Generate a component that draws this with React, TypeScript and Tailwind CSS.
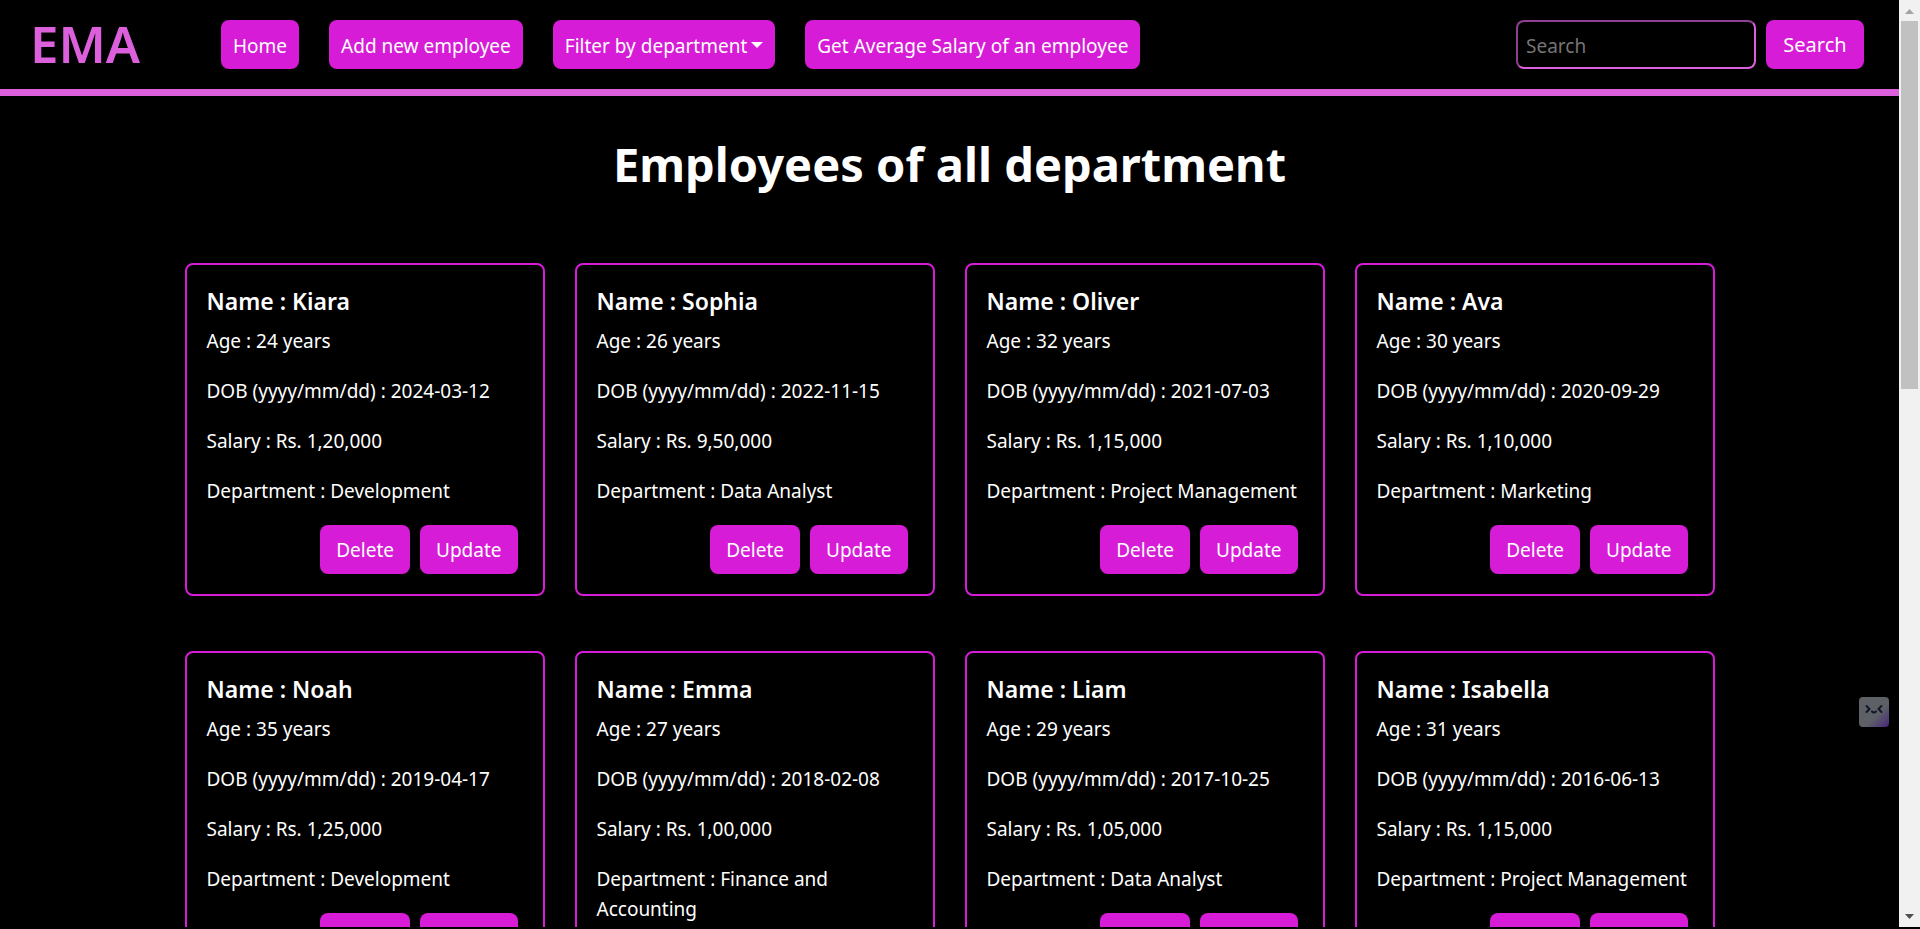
import React from "react";

type Employee = {
  name: string;
  age: number;
  dob: string;
  salary: string;
  department: string;
};

const employees: Employee[] = [
  { name: "Kiara", age: 24, dob: "2024-03-12", salary: "1,20,000", department: "Development" },
  { name: "Sophia", age: 26, dob: "2022-11-15", salary: "9,50,000", department: "Data Analyst" },
  { name: "Oliver", age: 32, dob: "2021-07-03", salary: "1,15,000", department: "Project Management" },
  { name: "Ava", age: 30, dob: "2020-09-29", salary: "1,10,000", department: "Marketing" },
  { name: "Noah", age: 35, dob: "2019-04-17", salary: "1,25,000", department: "Development" },
  { name: "Emma", age: 27, dob: "2018-02-08", salary: "1,00,000", department: "Finance and Accounting" },
  { name: "Liam", age: 29, dob: "2017-10-25", salary: "1,05,000", department: "Data Analyst" },
  { name: "Isabella", age: 31, dob: "2016-06-13", salary: "1,15,000", department: "Project Management" },
];

const navButton =
  "flex h-[49px] items-center whitespace-nowrap rounded-lg bg-[#d61cd6] px-3 pt-0.5 text-white";

function Header() {
  return (
    <header className="flex h-24 shrink-0 items-start border-b-[7px] border-[#dc5fdc] pt-5 pr-[35px] pl-[30px]">
      <a href="#" className="flex h-[49px] w-[191px] items-center pb-1 text-[51px] font-semibold text-[#dc5fdc]">
        EMA
      </a>
      <nav className="flex gap-[30px]">
        <a href="#" className={navButton}>Home</a>
        <a href="#" className={navButton}>Add new employee</a>
        <button type="button" className={navButton}>
          Filter by department
          <svg className="mb-0.5 ml-1 h-1.5 w-3" viewBox="0 0 12 6" fill="currentColor" aria-hidden="true">
            <path d="M0 0H12L6 6Z" />
          </svg>
        </button>
        <a href="#" className={navButton}>Get Average Salary of an employee</a>
      </nav>
      <form className="ml-auto flex gap-2.5" onSubmit={(e) => e.preventDefault()}>
        <input
          type="search"
          aria-label="Search"
          placeholder="Search"
          className="h-[49px] w-60 rounded-lg border-2 border-t-[#8f3f8f] border-r-[#dc5fdc] border-b-[#dc5fdc] border-l-[#8f3f8f] bg-black px-2 pt-0.5 text-white outline-none placeholder:text-[#757575]"
        />
        <button type="submit" className="h-[49px] w-[98px] rounded-lg bg-[#d61cd6] text-[20px] text-white">
          Search
        </button>
      </form>
    </header>
  );
}

const cardButton = "h-[49px] rounded-lg bg-[#d61cd6] px-4 text-white";

function EmployeeCard({ name, age, dob, salary, department }: Employee) {
  return (
    <article className="rounded-lg border-2 border-[#d61cd6] px-5 pt-[21px] pb-5">
      <h2 className="mb-2.5 text-[23px] leading-[30px] font-semibold">Name : {name}</h2>
      <div className="flex flex-col gap-5">
        <p>Age : {age} years</p>
        <p>DOB (yyyy/mm/dd) : {dob}</p>
        <p>Salary : Rs. {salary}</p>
        <p>Department : {department}</p>
      </div>
      <div className="mt-[19px] flex justify-end gap-2.5 pr-[5px]">
        <button type="button" className={cardButton}>Delete</button>
        <button type="button" className={cardButton}>Update</button>
      </div>
    </article>
  );
}

function Scrollbar() {
  return (
    <div className="flex w-[21px] shrink-0 flex-col items-center bg-[#f1f1f1]" aria-hidden="true">
      <svg className="h-[21px] w-[21px]" viewBox="0 0 21 21" fill="#a3a3a3">
        <path d="M6 14L10.500 9L15 14Z" />
      </svg>
      <div className="h-[368px] w-[17px] bg-[#c1c1c1]" />
      <svg className="mt-auto h-[21px] w-[21px]" viewBox="0 0 21 21" fill="#505050">
        <path d="M6 8L10.500 13L15 8Z" />
      </svg>
    </div>
  );
}

function AssistantBadge() {
  return (
    <button
      type="button"
      aria-label="Assistant"
      className="fixed top-[697px] right-[31px] h-[30px] w-[30px] overflow-hidden rounded bg-linear-to-br from-[#5d6065] from-60% to-[#4b1f7c]"
    >
      <svg className="h-full w-full" viewBox="0 0 30 30" fill="none" stroke="#11162a" strokeWidth="2" strokeLinecap="round" strokeLinejoin="round">
        <path d="M7.500 9L10.500 12L7.500 15M22.500 9L19.500 12L22.500 15M13 14.500Q15 16.500 17 14.500" />
      </svg>
    </button>
  );
}

export default function App() {
  return (
    <div className="h-screen overflow-hidden bg-black pb-0.5 font-['Noto_Sans','Open_Sans',sans-serif] text-[19px] leading-[30px] text-white">
      <div className="flex h-full">
        <div className="flex min-w-0 flex-1 flex-col overflow-hidden">
          <Header />
          <main>
            <h1 className="pt-[38px] text-center text-[47px] leading-[60px] font-bold">
              Employees of all department
            </h1>
            <div className="mx-auto mt-[69px] grid w-[1530px] max-w-full grid-cols-4 gap-x-[30px] gap-y-[55px]">
              {employees.map((employee) => (
                <EmployeeCard key={employee.name} {...employee} />
              ))}
            </div>
          </main>
        </div>
        <Scrollbar />
      </div>
      <AssistantBadge />
    </div>
  );
}
